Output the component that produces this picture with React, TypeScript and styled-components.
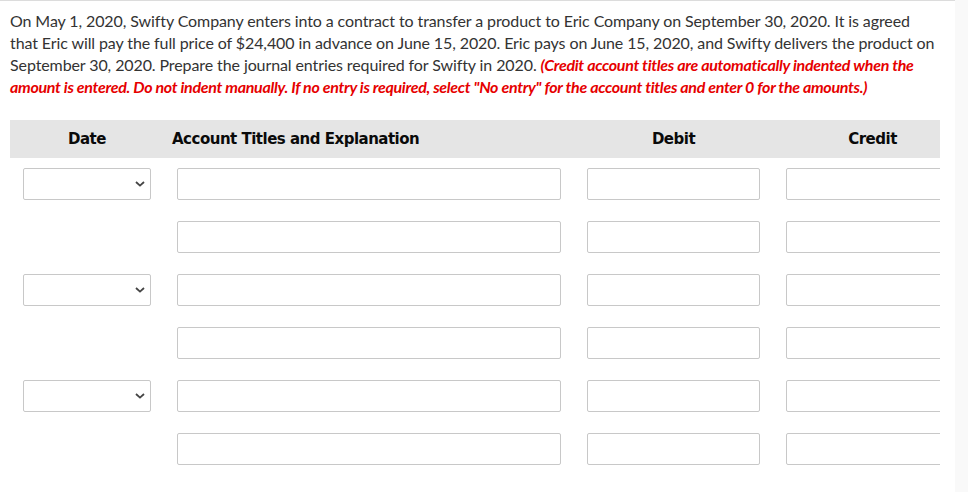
import React from "react";
import styled, { createGlobalStyle } from "styled-components";

const Global = createGlobalStyle`
  html, body { margin: 0; padding: 0; background: #fff; }
  body { font-family: Lato, "Open Sans", sans-serif; }
`;

const Page = styled.div`
  display: flex;
  width: 968px;
  height: 492px;
  overflow: hidden;
`;

const Main = styled.div`
  width: 955px;
  flex: none;
  border-top: 1px solid #dcdcdc;
  box-sizing: border-box;
`;

const Side = styled.div`
  flex: 1;
  background: #f9f9f9;
`;

const Question = styled.p`
  margin: 9px 0 0 0;
  padding: 0 10px;
  font-family: Lato, sans-serif;
  font-size: 16px;
  line-height: 22px;
  letter-spacing: -0.1px;
  color: #333;
  white-space: nowrap;
`;

const Note = styled.span`
  color: #e60000;
  font-weight: 700;
  font-style: italic;
  letter-spacing: -0.3px;
`;

const Table = styled.div`
  margin: 22px 0 0 10px;
  width: 930px;
  overflow: hidden;
`;

const Grid = styled.div`
  display: grid;
  grid-template-columns: 154px 410px 199px 199px;
  width: 962px;
`;

const HeaderCell = styled.div<{ $align: "left" | "center" }>`
  background: #e5e5e5;
  height: 38px;
  display: flex;
  align-items: center;
  justify-content: ${(p) => (p.$align === "left" ? "flex-start" : "center")};
  padding-left: ${(p) => (p.$align === "left" ? "8px" : "0")};
  margin-bottom: 10px;
  font-family: "DejaVu Sans", Verdana, sans-serif;
  font-weight: 700;
  font-size: 15px;
  color: #0a0a0a;
  letter-spacing: -0.5px;
`;

const Cell = styled.div`
  height: 32px;
  padding: 0 13px;
  margin-bottom: 21px;
  display: flex;
`;

const TextBox = styled.div`
  flex: 1;
  height: 32px;
  box-sizing: border-box;
  border: 1px solid #c8c8c8;
  border-radius: 2px;
  background: #fff;
`;

const SelectBox = styled.div`
  flex: 1;
  height: 32px;
  box-sizing: border-box;
  border: 1px solid #c8c8c8;
  border-radius: 2px;
  background: #fff;
  display: flex;
  align-items: center;
  justify-content: flex-end;
  padding-right: 5px;
`;

const Chevron = () => (
  <svg width="10" height="6" viewBox="0 0 10 6">
    <path d="M1 1 L5 4.6 L9 1" fill="none" stroke="#444" strokeWidth="1.8" />
  </svg>
);

const rows = [true, false, true, false, true, false];

export default function App() {
  return (
    <Page>
      <Global />
      <Main>
        <Question>
          On May 1, 2020, Swifty Company enters into a contract to transfer a product to Eric Company on September 30, 2020. It is agreed
          <br />
          that Eric will pay the full price of $24,400 in advance on June 15, 2020. Eric pays on June 15, 2020, and Swifty delivers the product on
          <br />
          September 30, 2020. Prepare the journal entries required for Swifty in 2020.{" "}
          <Note>
            (Credit account titles are automatically indented when the
            <br />
            amount is entered. Do not indent manually. If no entry is required, select "No entry" for the account titles and enter 0 for the amounts.)
          </Note>
        </Question>
        <Table>
          <Grid>
            <HeaderCell $align="center">Date</HeaderCell>
            <HeaderCell $align="left">Account Titles and Explanation</HeaderCell>
            <HeaderCell $align="center">Debit</HeaderCell>
            <HeaderCell $align="center">Credit</HeaderCell>
            {rows.map((hasDate, i) => (
              <React.Fragment key={i}>
                <Cell>
                  {hasDate && (
                    <SelectBox>
                      <Chevron />
                    </SelectBox>
                  )}
                </Cell>
                <Cell>
                  <TextBox />
                </Cell>
                <Cell>
                  <TextBox />
                </Cell>
                <Cell>
                  <TextBox />
                </Cell>
              </React.Fragment>
            ))}
          </Grid>
        </Table>
      </Main>
      <Side />
    </Page>
  );
}
